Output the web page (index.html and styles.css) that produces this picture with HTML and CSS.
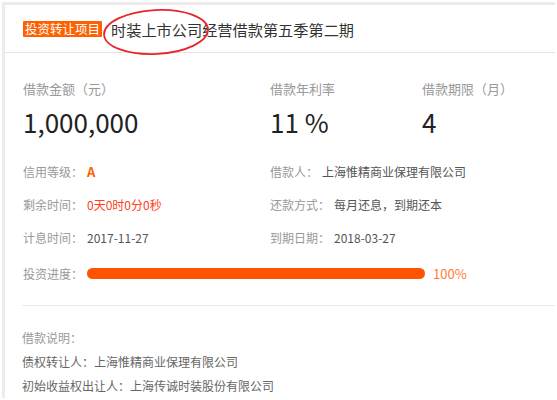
FILE: index.html
```html
<!DOCTYPE html>
<html lang="zh-CN">
<head>
    <meta charset="UTF-8">
    <title>时装上市公司经营借款第五季第二期</title>
    <link rel="stylesheet" href="styles.css">
</head>
<body>
<div class="card">
    <div class="header">
        <span class="tag">投资转让项目</span>
        <h1 class="title">时装上市公司经营借款第五季第二期</h1>
        <svg class="circle" width="110" height="48" viewBox="0 0 110 48">
            <ellipse cx="55" cy="24" rx="52" ry="22" fill="none" stroke="#e8262a" stroke-width="1.8" transform="rotate(-3 55 24)"/>
        </svg>
    </div>

    <div class="stats">
        <div class="stat">
            <p class="stat-label">借款金额（元）</p>
            <p class="stat-value">1,000,000</p>
        </div>
        <div class="stat">
            <p class="stat-label">借款年利率</p>
            <p class="stat-value">11 %</p>
        </div>
        <div class="stat">
            <p class="stat-label">借款期限（月）</p>
            <p class="stat-value">4</p>
        </div>
    </div>

    <div class="info">
        <div class="row"><span class="label">信用等级：</span><span class="grade">A</span></div>
        <div class="row"><span class="label">借款人：</span><span class="val">上海惟精商业保理有限公司</span></div>
        <div class="row"><span class="label">剩余时间：</span><span class="countdown">0天0时0分0秒</span></div>
        <div class="row"><span class="label">还款方式：</span><span class="val">每月还息，到期还本</span></div>
        <div class="row"><span class="label">计息时间：</span><span class="val">2017-11-27</span></div>
        <div class="row"><span class="label">到期日期：</span><span class="val">2018-03-27</span></div>
        <div class="row progress-row">
            <span class="label">投资进度：</span>
            <div class="bar"><div class="fill" style="width: 100%"></div></div>
            <span class="percent">100%</span>
        </div>
    </div>

    <div class="notes">
        <p class="note-title">借款说明：</p>
        <p>债权转让人：上海惟精商业保理有限公司</p>
        <p>初始收益权出让人：上海传诚时装股份有限公司</p>
    </div>
</div>
</body>
</html>
```

FILE: styles.css
```css
body {
    margin: 0;
    padding: 2px 2px 0 2px;
    background-color: white;
    font-family: "Noto Sans CJK SC", "Noto Sans", sans-serif;
    color: #666;
}

p {
    margin: 0;
}

.card {
    border-top: 3px solid #ececec;
    border-left: 3px solid #ececec;
    background-color: white;
}

.header {
    position: relative;
    display: flex;
    align-items: center;
    height: 46px;
    padding: 1px 0 0 18px;
    border-bottom: 1px solid #e6e6e6;
}

.tag {
    background-color: #ff6000;
    color: white;
    font-size: 12.5px;
    line-height: 16px;
    padding: 0 2px;
    border-radius: 1px;
}

.title {
    margin: 0 0 0 9px;
    font-size: 15.2px;
    font-weight: normal;
    color: #333;
}

.circle {
    position: absolute;
    left: 96px;
    top: 3px;
}

.stats {
    display: grid;
    grid-template-columns: 247px 152px 1fr;
    padding: 27px 0 0 18px;
    height: 83px;
}

.stat-label {
    font-size: 13px;
    line-height: 18px;
    color: #999;
}

.stat-value {
    margin-top: 9px;
    font-size: 26px;
    line-height: 30px;
    color: #222;
}

.info {
    display: grid;
    grid-template-columns: 247px 1fr;
    grid-auto-rows: 18px;
    row-gap: 15px;
    padding: 0 0 0 18px;
    font-size: 12px;
    line-height: 18px;
}

.label {
    color: #999;
    margin-right: 4px;
}

.val {
    color: #555;
}

.grade {
    color: #ff6000;
    font-weight: bold;
    font-size: 13px;
}

.countdown {
    color: #ff4020;
}

.progress-row {
    grid-column: 1 / 3;
    display: flex;
    align-items: center;
    margin-top: 5px;
}

.bar {
    width: 338px;
    height: 11px;
    background-color: #eee;
    border-radius: 6px;
}

.fill {
    height: 100%;
    background-color: #ff5500;
    border-radius: 6px;
}

.percent {
    margin-left: 8px;
    color: #ff7a33;
    font-size: 13px;
}

.notes {
    margin: 25px 0 0 17px;
    padding-top: 20px;
    border-top: 1px solid #e8e8e8;
    font-size: 12px;
    line-height: 24px;
    color: #666;
}

.note-title {
    color: #999;
}
```
